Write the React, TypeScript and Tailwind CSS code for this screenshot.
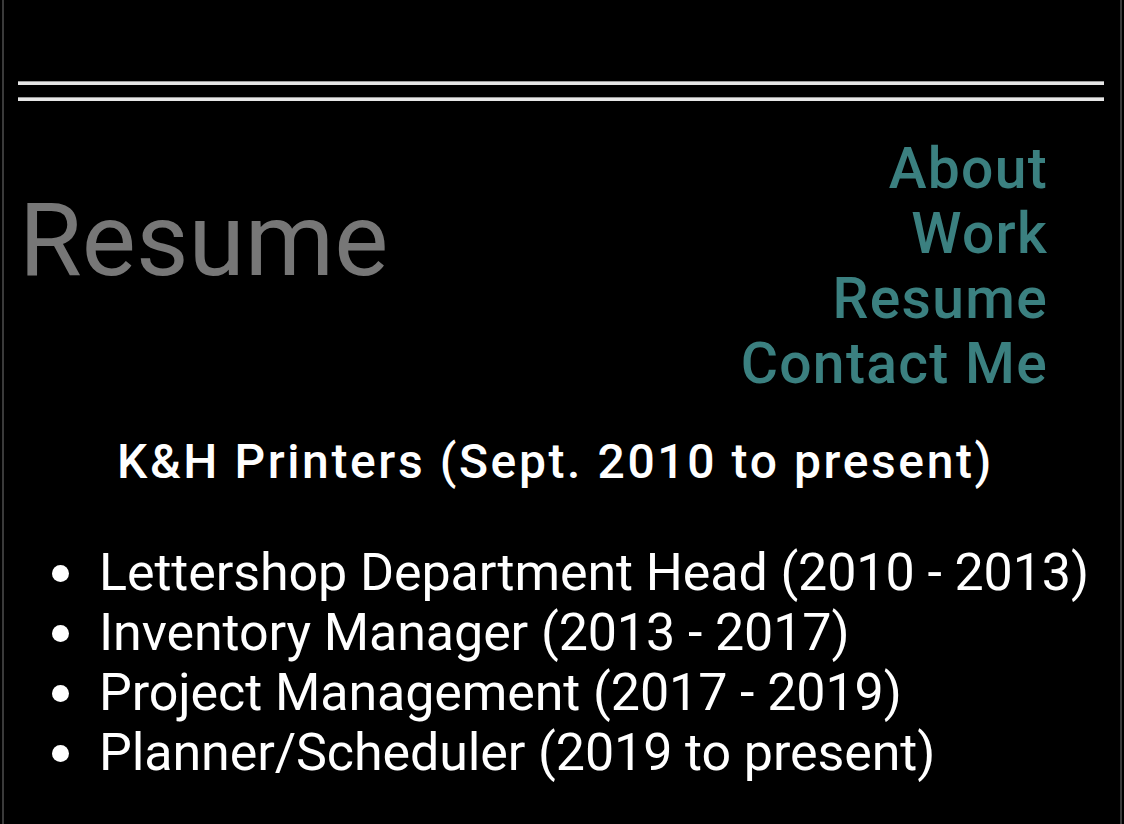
import React from "react";

export default function App() {
  const jobs = [
    "Lettershop Department Head (2010 - 2013)",
    "Inventory Manager (2013 - 2017)",
    "Project Management (2017 - 2019)",
    "Planner/Scheduler (2019 to present)",
  ];
  return (
    <div className="min-h-[824px] w-[1124px] bg-black px-[2px] font-['Roboto',sans-serif]">
      <div className="min-h-[824px] border-x-2 border-[#3a3a3a] bg-black">
        <div className="h-[81px]" />
        <div className="ml-[14px] mr-[16px] h-[4px] border-t border-[#9a9a9a] bg-[#e6e6e6]" />
        <div className="h-[12px]" />
        <div className="ml-[14px] mr-[16px] h-[4px] border-t border-[#9a9a9a] bg-[#e6e6e6]" />
        <div className="flex items-start justify-between pl-[15px] pr-[72px]">
          <h1 className="mt-[80px] text-[102px] leading-[118px] text-[#777777]">Resume</h1>
          <nav className="mt-[35px] flex flex-col items-end text-[57px] font-medium leading-[65px] tracking-[1.3px] text-[#3b8080]">
            <a>About</a>
            <a>Work</a>
            <a>Resume</a>
            <a>Contact Me</a>
          </nav>
        </div>
        <h2 className="mt-[38px] pl-[113px] text-[48px] font-medium leading-[56px] tracking-[2.6px] text-white">
          K&amp;H Printers (Sept. 2010 to present)
        </h2>
        <ul className="mt-[53px] pl-[48px] text-[52px] leading-[60px] text-white">
          {jobs.map((j) => (
            <li key={j} className="flex items-center">
              <span className="mr-[30px] h-[17px] w-[17px] shrink-0 rounded-full bg-white" />
              <span className="tracking-[-0.1px]">{j}</span>
            </li>
          ))}
        </ul>
      </div>
    </div>
  );
}
